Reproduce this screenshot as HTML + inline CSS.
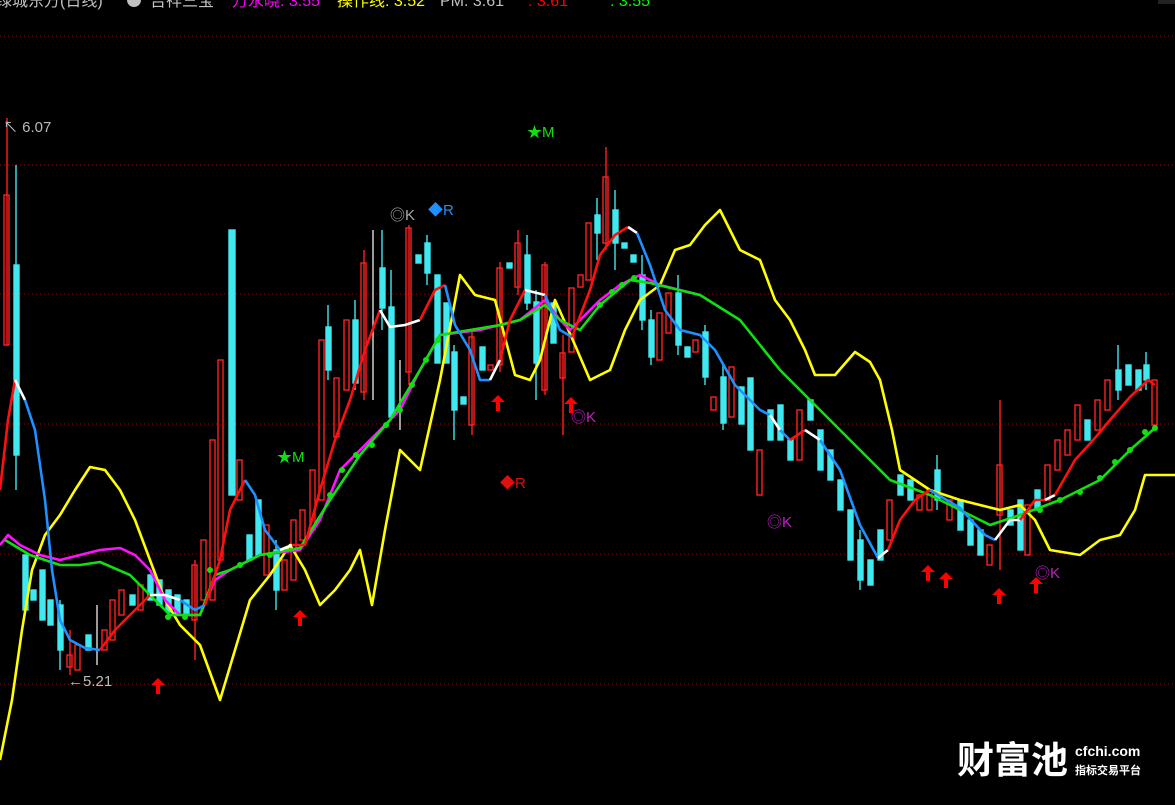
<!DOCTYPE html>
<html><head><meta charset="utf-8"><style>
html,body{margin:0;padding:0;background:#000;width:1175px;height:805px;overflow:hidden}
svg{display:block}
text{font-family:"Liberation Sans","Noto Sans CJK SC",sans-serif}
</style></head><body>
<svg width="1175" height="805" viewBox="0 0 1175 805" xmlns="http://www.w3.org/2000/svg">
<rect width="1175" height="805" fill="#000"/>
<g stroke="#a00" stroke-width="1" stroke-dasharray="1,3">
<line x1="0" y1="36" x2="1175" y2="36"/><line x1="0" y1="165" x2="1175" y2="165"/>
<line x1="0" y1="294" x2="1175" y2="294"/><line x1="0" y1="424" x2="1175" y2="424"/>
<line x1="0" y1="554" x2="1175" y2="554"/><line x1="0" y1="684" x2="1175" y2="684"/>
</g>
<g font-size="16">
<text x="-4" y="6" fill="#c0c0c0">绿城东方(日线)</text>
<circle cx="134" cy="0" r="7" fill="#c0c0c0"/>
<text x="150" y="6" fill="#c0c0c0">吉祥三宝</text>
<text x="232" y="6" fill="#f0f">万永晓: 3.55</text>
<text x="337" y="6" fill="#ff0">操作线: 3.52</text>
<text x="440" y="6" fill="#c0c0c0">PM: 3.61</text>
<text x="528" y="6" fill="#f00">: 3.61</text>
<text x="610" y="6" fill="#0f0">: 3.55</text>
</g>
<rect x="1158" y="-10" width="20" height="14" fill="#222"/>
<g stroke-width="1.4">
<g stroke="#ff2020" fill="none">
<line x1="7" y1="118" x2="7" y2="345"/><rect x="4" y="195" width="5" height="150"/>
<line x1="70" y1="630" x2="70" y2="675"/><rect x="67" y="655" width="5" height="12"/>
<rect x="75" y="645" width="5" height="25"/><rect x="102" y="630" width="5" height="20"/>
<rect x="110" y="600" width="5" height="40"/><rect x="119" y="590" width="5" height="25"/>
<rect x="138" y="585" width="5" height="25"/>
<line x1="195" y1="560" x2="195" y2="660"/><rect x="192" y="565" width="5" height="55"/>
<rect x="201" y="540" width="5" height="60"/><rect x="210" y="440" width="5" height="160"/>
<rect x="218" y="360" width="5" height="200"/><rect x="237" y="460" width="5" height="40"/>
<rect x="264" y="525" width="5" height="50"/><rect x="282" y="560" width="5" height="30"/>
<rect x="291" y="520" width="5" height="60"/><rect x="300" y="510" width="5" height="30"/>
<rect x="310" y="470" width="5" height="60"/><rect x="319" y="340" width="5" height="160"/>
<rect x="334" y="378" width="5" height="59"/><rect x="344" y="320" width="5" height="70"/>
<line x1="364" y1="250" x2="364" y2="400"/><rect x="361" y="263" width="5" height="129"/>
<line x1="409" y1="225" x2="409" y2="385"/><rect x="406" y="228" width="5" height="144"/>
<line x1="472" y1="330" x2="472" y2="435"/><rect x="469" y="337" width="5" height="88"/>
<rect x="488" y="365" width="5" height="5"/>
<line x1="500" y1="262" x2="500" y2="372"/><rect x="497" y="268" width="5" height="97"/>
<line x1="518" y1="230" x2="518" y2="295"/><rect x="515" y="243" width="5" height="44"/>
<line x1="545" y1="262" x2="545" y2="395"/><rect x="542" y="265" width="5" height="125"/>
<line x1="563" y1="335" x2="563" y2="435"/><rect x="560" y="353" width="5" height="25"/>
<rect x="569" y="288" width="5" height="64"/><rect x="578" y="275" width="5" height="12"/>
<rect x="586" y="223" width="5" height="57"/>
<line x1="606" y1="147" x2="606" y2="250"/><rect x="603" y="177" width="5" height="66"/>
<rect x="657" y="313" width="5" height="47"/><rect x="666" y="293" width="5" height="40"/>
<rect x="693" y="340" width="5" height="12"/><rect x="711" y="397" width="5" height="13"/>
<rect x="729" y="367" width="5" height="50"/><rect x="757" y="450" width="5" height="45"/>
<rect x="797" y="410" width="5" height="50"/><rect x="887" y="500" width="5" height="40"/>
<rect x="917" y="495" width="5" height="15"/><rect x="927" y="490" width="5" height="20"/>
<rect x="947" y="500" width="5" height="20"/><rect x="987" y="545" width="5" height="20"/>
<line x1="1000" y1="400" x2="1000" y2="570"/><rect x="997" y="465" width="5" height="50"/>
<rect x="1025" y="505" width="5" height="50"/><rect x="1045" y="465" width="5" height="35"/>
<rect x="1055" y="440" width="5" height="30"/><rect x="1065" y="430" width="5" height="25"/>
<rect x="1075" y="405" width="5" height="35"/><rect x="1095" y="400" width="5" height="30"/>
<rect x="1105" y="380" width="5" height="30"/><rect x="1152" y="380" width="5" height="45"/>
</g>
<g stroke="#40e8f0" fill="#40e8f0">
<line x1="16" y1="165" x2="16" y2="490"/><rect x="14" y="265" width="5" height="190"/>
<rect x="23" y="555" width="5" height="55"/><rect x="31" y="590" width="5" height="10"/>
<rect x="40" y="570" width="5" height="50"/><rect x="48" y="600" width="5" height="25"/>
<line x1="60" y1="600" x2="60" y2="670"/><rect x="58" y="605" width="5" height="45"/>
<rect x="86" y="635" width="5" height="15"/><rect x="130" y="595" width="5" height="10"/>
<rect x="148" y="575" width="5" height="25"/><rect x="157" y="580" width="5" height="25"/>
<rect x="166" y="590" width="5" height="22"/><rect x="175" y="595" width="5" height="20"/>
<rect x="184" y="600" width="5" height="15"/>
<rect x="229" y="230" width="6" height="265"/>
<rect x="247" y="535" width="5" height="25"/><rect x="256" y="500" width="5" height="55"/>
<line x1="276" y1="540" x2="276" y2="610"/><rect x="274" y="550" width="5" height="40"/>
<line x1="328" y1="305" x2="328" y2="380"/><rect x="326" y="327" width="5" height="43"/>
<line x1="355" y1="300" x2="355" y2="390"/><rect x="353" y="320" width="5" height="63"/>
<line x1="382" y1="230" x2="382" y2="330"/><rect x="380" y="268" width="5" height="40"/>
<line x1="391" y1="270" x2="391" y2="420"/><rect x="389" y="307" width="5" height="110"/>
<rect x="416" y="255" width="5" height="8"/>
<line x1="427" y1="235" x2="427" y2="285"/><rect x="425" y="243" width="5" height="30"/>
<rect x="435" y="275" width="5" height="88"/><rect x="444" y="303" width="5" height="60"/>
<line x1="454" y1="345" x2="454" y2="440"/><rect x="452" y="352" width="5" height="58"/>
<rect x="461" y="397" width="5" height="7"/><rect x="480" y="347" width="5" height="23"/>
<rect x="507" y="263" width="5" height="5"/>
<line x1="527" y1="235" x2="527" y2="310"/><rect x="525" y="255" width="5" height="48"/>
<line x1="536" y1="290" x2="536" y2="400"/><rect x="534" y="302" width="5" height="61"/>
<rect x="551" y="303" width="5" height="40"/>
<line x1="597" y1="198" x2="597" y2="260"/><rect x="595" y="215" width="5" height="18"/>
<line x1="615" y1="190" x2="615" y2="270"/><rect x="613" y="210" width="5" height="33"/>
<rect x="622" y="243" width="5" height="5"/><rect x="631" y="255" width="5" height="7"/>
<line x1="642" y1="255" x2="642" y2="330"/><rect x="640" y="275" width="5" height="45"/>
<line x1="651" y1="310" x2="651" y2="365"/><rect x="649" y="320" width="5" height="37"/>
<line x1="678" y1="275" x2="678" y2="355"/><rect x="676" y="293" width="5" height="52"/>
<rect x="685" y="347" width="5" height="10"/>
<line x1="705" y1="325" x2="705" y2="385"/><rect x="703" y="332" width="5" height="45"/>
<line x1="723" y1="365" x2="723" y2="430"/><rect x="721" y="377" width="5" height="46"/>
<rect x="739" y="387" width="5" height="37"/><rect x="748" y="378" width="5" height="72"/>
<rect x="768" y="410" width="5" height="30"/><rect x="778" y="405" width="5" height="35"/>
<rect x="788" y="440" width="5" height="20"/><rect x="808" y="400" width="5" height="20"/>
<rect x="818" y="430" width="5" height="40"/><rect x="828" y="450" width="5" height="30"/>
<rect x="838" y="480" width="5" height="30"/><rect x="848" y="510" width="5" height="50"/>
<line x1="860" y1="530" x2="860" y2="590"/><rect x="858" y="540" width="5" height="40"/>
<rect x="868" y="560" width="5" height="25"/><rect x="878" y="530" width="5" height="30"/>
<rect x="898" y="475" width="5" height="20"/><rect x="908" y="480" width="5" height="20"/>
<line x1="937" y1="455" x2="937" y2="510"/><rect x="935" y="470" width="5" height="30"/>
<rect x="958" y="500" width="5" height="30"/><rect x="968" y="520" width="5" height="25"/>
<rect x="978" y="530" width="5" height="25"/><rect x="1008" y="510" width="5" height="15"/>
<rect x="1018" y="500" width="5" height="50"/><rect x="1035" y="490" width="5" height="20"/>
<rect x="1085" y="420" width="5" height="20"/>
<line x1="1118" y1="345" x2="1118" y2="400"/><rect x="1116" y="370" width="5" height="20"/>
<rect x="1126" y="365" width="5" height="20"/><rect x="1136" y="370" width="5" height="20"/>
<line x1="1146" y1="352" x2="1146" y2="390"/><rect x="1144" y="365" width="5" height="15"/>
</g>
<g stroke="#ddd"><line x1="97" y1="605" x2="97" y2="665"/><line x1="373" y1="230" x2="373" y2="400"/><line x1="400" y1="360" x2="400" y2="430"/></g>
</g>
<g fill="none" stroke-width="2.6" stroke-linejoin="round">
<polyline stroke="#ff0" points="0,760 12,700 22,630 32,570 45,535 60,515 75,490 90,467 105,470 120,490 135,520 150,560 165,600 180,625 200,645 220,700 235,650 250,600 270,575 290,545 305,570 320,605 335,590 350,570 360,550 372,605 385,530 400,450 420,470 440,380 460,275 475,295 495,300 515,375 530,380 540,360 555,300 575,345 590,380 610,370 625,330 640,300 660,285 675,250 690,245 705,225 720,210 740,250 760,260 775,300 790,320 805,350 815,375 835,375 855,352 870,362 880,380 892,430 900,470 930,490 960,500 1000,510 1020,505 1035,520 1050,550 1080,555 1100,540 1120,535 1135,510 1145,475 1175,475"/>
<polyline stroke="#ff10ff" points="0,545 8,535 20,545 40,555 60,560 80,555 100,550 120,548 135,555 150,570 165,600 180,615 200,615 215,580 230,570 260,555 300,550 320,520 340,470 360,450 380,430 400,410 420,370 440,335 480,330 500,325 520,320 545,300 560,320 570,330 600,300 620,285 640,275 660,285 700,295"/>
<polyline stroke="#10e010" points="5,540 30,555 60,565 80,565 100,562 130,575 150,595 170,615 200,615 215,575 230,570 260,555 300,548 330,500 360,455 390,420 420,370 440,335 500,325 520,320 545,305 560,320 580,330 600,305 630,280 650,283 700,295 740,320 760,345 780,370 820,410 860,450 890,480 930,495 960,510 990,525 1020,515 1060,500 1100,480 1130,450 1155,428"/>
<g fill="#10e010" stroke="none">
<circle cx="330" cy="495" r="3"/><circle cx="342" cy="470" r="3"/><circle cx="356" cy="455" r="3"/><circle cx="372" cy="445" r="3"/><circle cx="386" cy="425" r="3"/><circle cx="400" cy="410" r="3"/><circle cx="412" cy="385" r="3"/><circle cx="426" cy="360" r="3"/><circle cx="438" cy="340" r="3"/>
<circle cx="600" cy="305" r="3"/><circle cx="612" cy="292" r="3"/><circle cx="622" cy="285" r="3"/><circle cx="634" cy="278" r="3"/>
<circle cx="1040" cy="510" r="3"/><circle cx="1060" cy="500" r="3"/><circle cx="1080" cy="492" r="3"/><circle cx="1100" cy="478" r="3"/><circle cx="1115" cy="462" r="3"/><circle cx="1130" cy="450" r="3"/><circle cx="1145" cy="432" r="3"/><circle cx="1155" cy="428" r="3"/>
<circle cx="210" cy="570" r="3"/><circle cx="240" cy="565" r="3"/><circle cx="270" cy="555" r="3"/><circle cx="168" cy="617" r="3"/><circle cx="185" cy="617" r="3"/>
</g>
<polyline stroke="#ff1010" points="0,490 8,420 15,380"/>
<polyline stroke="#fff" points="15,380 25,400"/>
<polyline stroke="#1e90ff" points="25,400 35,430 45,500 52,570 60,620 70,640 85,648 100,650"/>
<polyline stroke="#ff1010" points="100,650 115,630 130,615 150,595"/>
<polyline stroke="#fff" points="150,595 165,595 180,600"/>
<polyline stroke="#1e90ff" points="180,600 195,610 205,605"/>
<polyline stroke="#ff1010" points="205,605 220,560 230,510 245,480"/>
<polyline stroke="#1e90ff" points="245,480 255,495 265,530 280,550"/>
<polyline stroke="#fff" points="280,550 292,545"/>
<polyline stroke="#ff1010" points="292,545 305,545 320,490 335,440 350,400 365,350 380,310"/>
<polyline stroke="#fff" points="380,310 390,327 405,325 420,320"/>
<polyline stroke="#ff1010" points="420,320 435,290 445,285"/>
<polyline stroke="#1e90ff" points="445,285 455,325 470,350 480,380 490,380"/>
<polyline stroke="#fff" points="490,380 500,360"/>
<polyline stroke="#ff1010" points="500,360 510,320 525,290"/>
<polyline stroke="#fff" points="525,290 545,295"/>
<polyline stroke="#1e90ff" points="545,295 560,330 572,337"/>
<polyline stroke="#ff1010" points="572,337 590,290 600,255 615,235 628,227"/>
<polyline stroke="#fff" points="628,227 637,233"/>
<polyline stroke="#1e90ff" points="637,233 650,265 665,310 680,330 700,335 715,350 735,385 760,410 770,415"/>
<polyline stroke="#fff" points="770,415 780,430"/>
<polyline stroke="#1e90ff" points="780,430 790,440"/>
<polyline stroke="#ff1010" points="790,440 805,430"/>
<polyline stroke="#fff" points="805,430 820,440"/>
<polyline stroke="#1e90ff" points="820,440 840,470 860,525 878,558"/>
<polyline stroke="#fff" points="878,558 888,550"/>
<polyline stroke="#ff1010" points="888,550 900,520 915,500 930,490"/>
<polyline stroke="#1e90ff" points="930,490 960,508 985,535 995,540"/>
<polyline stroke="#fff" points="995,540 1010,520 1020,520"/>
<polyline stroke="#ff1010" points="1020,520 1035,500 1045,500"/>
<polyline stroke="#fff" points="1045,500 1055,495"/>
<polyline stroke="#ff1010" points="1055,495 1075,460 1095,438 1110,420 1130,397 1148,380 1155,385"/>
</g>
<g fill="#f00">
<path d="M158,678 l-7,7 h5 v9 h4 v-9 h5 z"/>
<path d="M300,610 l-7,7 h5 v9 h4 v-9 h5 z"/>
<path d="M498,395 l-7,7 h5 v9 h4 v-9 h5 z"/>
<path d="M571,397 l-7,7 h5 v9 h4 v-9 h5 z"/>
<path d="M928,565 l-7,7 h5 v9 h4 v-9 h5 z"/>
<path d="M946,572 l-7,7 h5 v9 h4 v-9 h5 z"/>
<path d="M999,588 l-7,7 h5 v9 h4 v-9 h5 z"/>
<path d="M1036,577 l-7,7 h5 v9 h4 v-9 h5 z"/>
</g>
<g font-size="15">
<text x="277" y="462" fill="#10e010">★M</text>
<text x="527" y="137" fill="#10e010">★M</text>
<text x="390" y="220" fill="#aaa">◎K</text>
<text x="428" y="215" fill="#1e90ff">◆R</text>
<text x="571" y="422" fill="#c020c0">◎K</text>
<text x="767" y="527" fill="#c020c0">◎K</text>
<text x="1035" y="578" fill="#c020c0">◎K</text>
<text x="500" y="488" fill="#e01010">◆R</text>
<text x="3" y="132" fill="#bbb">↖ 6.07</text>
<text x="68" y="686" fill="#bbb">←5.21</text>
</g>
<g fill="#fff">
<text x="957" y="773" font-size="37" font-weight="bold" font-family="'Noto Sans CJK SC',sans-serif">财富池</text>
<text x="1075" y="756" font-size="14" font-weight="bold">cfchi.com</text>
<text x="1075" y="774" font-size="11" font-weight="bold" font-family="'Noto Sans CJK SC',sans-serif">指标交易平台</text>
</g>
</svg>
</body></html>
